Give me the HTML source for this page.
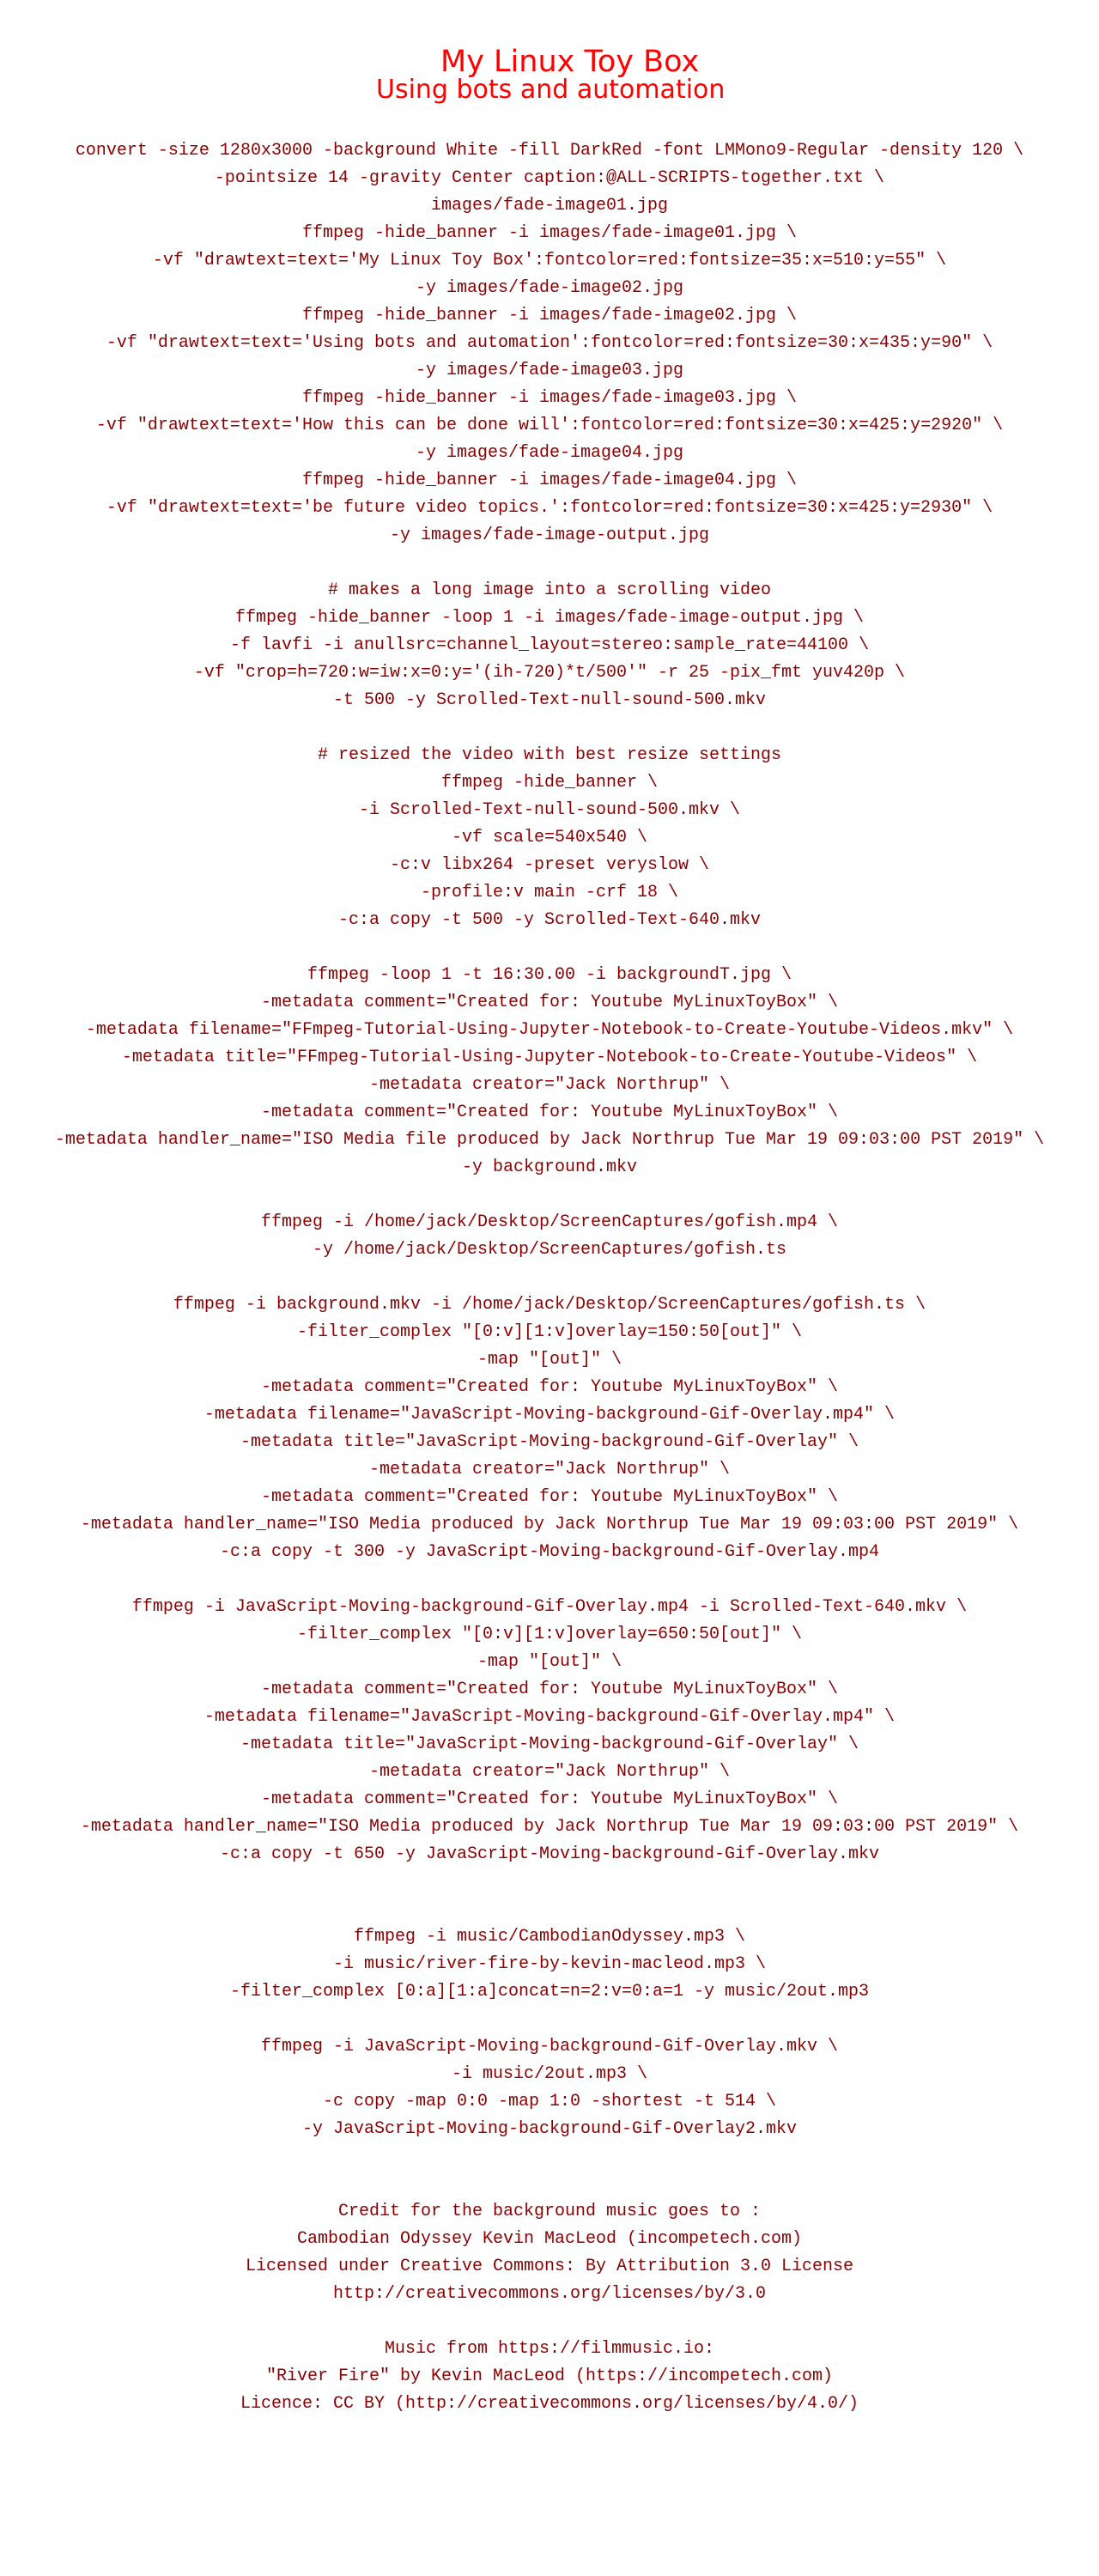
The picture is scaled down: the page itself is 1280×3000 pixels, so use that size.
<!DOCTYPE html>
<html><head><meta charset="utf-8"><style>
html,body{margin:0;padding:0;background:#fff;}
body{width:1280px;height:3000px;position:relative;overflow:hidden;}
.t{position:absolute;font-family:"DejaVu Sans","Liberation Sans",sans-serif;color:#ff0000;white-space:nowrap;line-height:1;}
#code{position:absolute;left:0;top:160px;width:1280px;text-align:center;white-space:pre;font-family:"Liberation Mono",monospace;font-size:20px;line-height:32px;color:#8b0000;}
</style></head><body>
<div class="t" style="left:513px;top:55px;font-size:35px;">My Linux Toy Box</div>
<div class="t" style="left:438px;top:90px;font-size:30px;">Using bots and automation</div>
<div id="code">convert -size 1280x3000 -background White -fill DarkRed -font LMMono9-Regular -density 120 \
-pointsize 14 -gravity Center caption:@ALL-SCRIPTS-together.txt \
images/fade-image01.jpg
ffmpeg -hide_banner -i images/fade-image01.jpg \
-vf "drawtext=text='My Linux Toy Box':fontcolor=red:fontsize=35:x=510:y=55" \
-y images/fade-image02.jpg
ffmpeg -hide_banner -i images/fade-image02.jpg \
-vf "drawtext=text='Using bots and automation':fontcolor=red:fontsize=30:x=435:y=90" \
-y images/fade-image03.jpg
ffmpeg -hide_banner -i images/fade-image03.jpg \
-vf "drawtext=text='How this can be done will':fontcolor=red:fontsize=30:x=425:y=2920" \
-y images/fade-image04.jpg
ffmpeg -hide_banner -i images/fade-image04.jpg \
-vf "drawtext=text='be future video topics.':fontcolor=red:fontsize=30:x=425:y=2930" \
-y images/fade-image-output.jpg

# makes a long image into a scrolling video
ffmpeg -hide_banner -loop 1 -i images/fade-image-output.jpg \
-f lavfi -i anullsrc=channel_layout=stereo:sample_rate=44100 \
-vf "crop=h=720:w=iw:x=0:y='(ih-720)*t/500'" -r 25 -pix_fmt yuv420p \
-t 500 -y Scrolled-Text-null-sound-500.mkv

# resized the video with best resize settings
ffmpeg -hide_banner \
-i Scrolled-Text-null-sound-500.mkv \
-vf scale=540x540 \
-c:v libx264 -preset veryslow \
-profile:v main -crf 18 \
-c:a copy -t 500 -y Scrolled-Text-640.mkv

ffmpeg -loop 1 -t 16:30.00 -i backgroundT.jpg \
-metadata comment="Created for: Youtube MyLinuxToyBox" \
-metadata filename="FFmpeg-Tutorial-Using-Jupyter-Notebook-to-Create-Youtube-Videos.mkv" \
-metadata title="FFmpeg-Tutorial-Using-Jupyter-Notebook-to-Create-Youtube-Videos" \
-metadata creator="Jack Northrup" \
-metadata comment="Created for: Youtube MyLinuxToyBox" \
-metadata handler_name="ISO Media file produced by Jack Northrup Tue Mar 19 09:03:00 PST 2019" \
-y background.mkv

ffmpeg -i /home/jack/Desktop/ScreenCaptures/gofish.mp4 \
-y /home/jack/Desktop/ScreenCaptures/gofish.ts

ffmpeg -i background.mkv -i /home/jack/Desktop/ScreenCaptures/gofish.ts \
-filter_complex "[0:v][1:v]overlay=150:50[out]" \
-map "[out]" \
-metadata comment="Created for: Youtube MyLinuxToyBox" \
-metadata filename="JavaScript-Moving-background-Gif-Overlay.mp4" \
-metadata title="JavaScript-Moving-background-Gif-Overlay" \
-metadata creator="Jack Northrup" \
-metadata comment="Created for: Youtube MyLinuxToyBox" \
-metadata handler_name="ISO Media produced by Jack Northrup Tue Mar 19 09:03:00 PST 2019" \
-c:a copy -t 300 -y JavaScript-Moving-background-Gif-Overlay.mp4

ffmpeg -i JavaScript-Moving-background-Gif-Overlay.mp4 -i Scrolled-Text-640.mkv \
-filter_complex "[0:v][1:v]overlay=650:50[out]" \
-map "[out]" \
-metadata comment="Created for: Youtube MyLinuxToyBox" \
-metadata filename="JavaScript-Moving-background-Gif-Overlay.mp4" \
-metadata title="JavaScript-Moving-background-Gif-Overlay" \
-metadata creator="Jack Northrup" \
-metadata comment="Created for: Youtube MyLinuxToyBox" \
-metadata handler_name="ISO Media produced by Jack Northrup Tue Mar 19 09:03:00 PST 2019" \
-c:a copy -t 650 -y JavaScript-Moving-background-Gif-Overlay.mkv


ffmpeg -i music/CambodianOdyssey.mp3 \
-i music/river-fire-by-kevin-macleod.mp3 \
-filter_complex [0:a][1:a]concat=n=2:v=0:a=1 -y music/2out.mp3

ffmpeg -i JavaScript-Moving-background-Gif-Overlay.mkv \
-i music/2out.mp3 \
-c copy -map 0:0 -map 1:0 -shortest -t 514 \
-y JavaScript-Moving-background-Gif-Overlay2.mkv


Credit for the background music goes to :
Cambodian Odyssey Kevin MacLeod (incompetech.com)
Licensed under Creative Commons: By Attribution 3.0 License
http://creativecommons.org/licenses/by/3.0

Music from https://filmmusic.io:
"River Fire" by Kevin MacLeod (https://incompetech.com)
Licence: CC BY (http://creativecommons.org/licenses/by/4.0/)</div>
</body></html>
